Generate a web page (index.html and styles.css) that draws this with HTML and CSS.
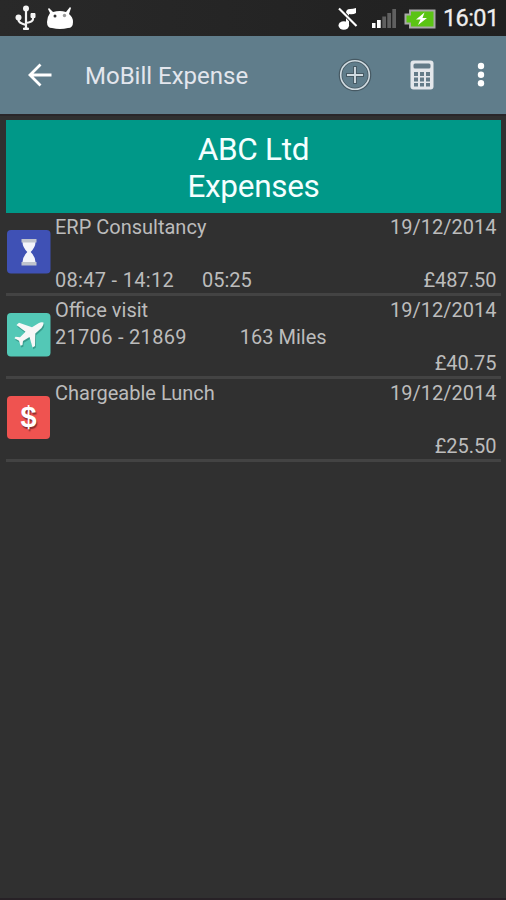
FILE: index.html
```html
<!DOCTYPE html>
<html lang="en">
<head>
<meta charset="utf-8">
<title>MoBill Expense</title>
<link rel="stylesheet" href="styles.css">
</head>
<body>
<div class="status">
  <svg class="usb" width="22" height="28" viewBox="0 0 22 28" fill="none" stroke="#f4f4f4" stroke-width="2.2">
    <path d="M11 3V25M3.500 14v2q0 3 7.500 5M18 12v3q0 3-7 4"/>
    <circle cx="11" cy="4.500" r="3" fill="#f4f4f4" stroke="none"/><circle cx="3.500" cy="13.500" r="3" fill="#f4f4f4" stroke="none"/><path d="M16 9.500h4v4h-4zM8.500 24h5v1.500h-5z" fill="#f4f4f4" stroke-width="1"/>
  </svg>
  <svg class="droid" width="28" height="24" viewBox="0 0 28 24">
    <path d="M3 1l4 4q7-2 13 0l4-5 1 1-2 6q4 3 4 8 0 6-5 6-8 2-16 0-5 0-5-6Q1 10 4 6L2 2Z" fill="#fff"/>
    <circle cx="9" cy="9" r="1.500" fill="#333"/><circle cx="18.500" cy="8.500" r="1.700" fill="#999"/>
  </svg>
  <span class="spacer"></span>
  <svg class="mute" width="20" height="24" viewBox="0 0 20 24">
    <ellipse cx="5.800" cy="18.500" rx="5.300" ry="4.200" fill="#fff"/>
    <path d="M8 19V6q0-4 4-4 3 0 6-1v5q-3 2-7 1v12Z" fill="#fff"/>
    <path d="M2 2l17 18" stroke="#222" stroke-width="4"/><path d="M1 1.500l17.500 17.500" stroke="#fff" stroke-width="2.200"/>
  </svg>
  <svg class="signal" width="26" height="20" viewBox="0 0 26 20">
    <path d="M1 14h3.500v5H1zM6 11h3.700v8H6z" fill="#fff"/><path d="M11.300 7.500H15V19h-3.700zM16.300 4H20v15h-3.700zM21.300 0H25v19h-3.700z" fill="#606060"/>
  </svg>
  <svg class="battery" width="32" height="20" viewBox="0 0 32 20">
    <path d="M6 1.500h24.500v17H6v-4H1.500v-9H6Z" fill="#5bc414" stroke="#a8a8a8" stroke-width="2"/>
    <path d="M20.500 3.500l-8.500 7h4.500L14 16l9-7h-4.500Z" fill="#fff"/>
  </svg>
  <span class="clock">16:01</span>
</div>
<header class="bar">
  <svg class="back" width="24" height="24" viewBox="0 0 24 24" fill="none" stroke="#fff" stroke-width="2.800"><path d="M23.500 12H2M12.500 1.500L2 12l10.500 10.500"/></svg>
  <h1 class="title">MoBill Expense</h1>
  <span class="spacer"></span>
  <svg class="add" width="34" height="34" viewBox="0 0 34 34" fill="none">
    <circle cx="17" cy="17" r="14.500" stroke="#465963" stroke-width="3.600"/><path d="M17 8v18M8 17h18" stroke="#465963" stroke-width="3.800"/>
    <circle cx="17" cy="17" r="14.300" stroke="#d0dbe1" stroke-width="1.600"/><path d="M17 9v16M9 17h16" stroke="#d0dbe1" stroke-width="1.900"/>
  </svg>
  <svg class="calc" width="24" height="30" viewBox="0 0 24 30">
    <rect x=".5" y=".5" width="23" height="29" rx="3" fill="#e3e7eb"/>
    <rect x="3.500" y="3.500" width="17" height="5" rx="1.500" fill="#637b88"/>
    <path d="M4 12h4v4H4zM10 12h4v4h-4zM16 12h4v4h-4zM4 17.500h4v4H4zM10 17.500h4v4h-4zM16 17.500h4v4h-4zM4 23h4v3.500H4zM10 23h4v3.500h-4zM16 23h4v3.500h-4z" fill="#637b88"/>
  </svg>
  <svg class="more" width="8" height="26" viewBox="0 0 8 26" fill="#fff"><circle cx="4" cy="4" r="3.200"/><circle cx="4" cy="12.700" r="3.200"/><circle cx="4" cy="21.300" r="3.200"/></svg>
</header>
<main class="content">
  <h2 class="banner"><span>ABC Ltd</span><span>Expenses</span></h2>
  <section class="row">
    <svg class="tile" width="44" height="44" viewBox="0 0 44 44">
      <rect width="43.500" height="43.500" rx="4" fill="#3f51b5"/>
      <path d="M15.500 12h13q0 5-4.800 10 4.800 5 4.800 10h-13q0-5 4.800-10-4.800-5-4.800-10Z" fill="#f3f4fb"/><path d="M14.500 9h15v3.500h-15zM14.500 32h15v3.500h-15z" fill="#bfc3cd"/>
    </svg>
    <div class="details">
      <div class="line"><span>ERP Consultancy</span><span class="date">19/12/2014</span></div>
      <div class="line"></div>
      <div class="line"><span class="range">08:47 - 14:12</span><span class="duration">05:25</span><span class="amount">£487.50</span></div>
    </div>
  </section>
  <section class="row">
    <svg class="tile" width="44" height="44" viewBox="0 0 44 44">
      <rect width="43.500" height="43.500" rx="4" fill="#53c8b6"/>
      <path transform="translate(.8 1.800)" d="M36.500 9.500q-2.500-.8-5 .8l-6.500 4-13-4.500-2.500 2.200 9 6.800-5.500 5.500-4.500-.5-1 1.500 4.500 2.500 1.500 5 2-.8.500-4 6.500-4 3 10.500 2.500-1.500.3-12.500 6.200-5.500q2.500-2.500 2-5.500Z" fill="#267f72" opacity=".6"/>
      <path d="M36.500 9.500q-2.500-.8-5 .8l-6.500 4-13-4.500-2.500 2.200 9 6.800-5.500 5.500-4.500-.5-1 1.500 4.500 2.500 1.500 5 2-.8.500-4 6.500-4 3 10.500 2.500-1.500.3-12.500 6.200-5.500q2.500-2.500 2-5.500Z" fill="#f7f7f7"/>
    </svg>
    <div class="details">
      <div class="line"><span>Office visit</span><span class="date">19/12/2014</span></div>
      <div class="line"><span class="range">21706 - 21869</span><span class="miles">163 Miles</span></div>
      <div class="line"><span class="amount">£40.75</span></div>
    </div>
  </section>
  <section class="row">
    <div class="tile dollar">$</div>
    <div class="details">
      <div class="line"><span>Chargeable Lunch</span><span class="date">19/12/2014</span></div>
      <div class="line"></div>
      <div class="line"><span class="amount">£25.50</span></div>
    </div>
  </section>
</main>
</body>
</html>
```
FILE: styles.css
```css
* { box-sizing: border-box; }
body {
  margin: 0;
  height: 900px;
  background: #303030;
  border-bottom: 2px solid #272126;
  color: #bcbcbc;
  font-family: Roboto, "Liberation Sans", sans-serif;
  overflow: hidden;
}
svg { display: block; flex: none; }
.spacer { flex: 1; }
.status {
  display: flex;
  align-items: center;
  height: 36px;
  padding: 0 8px 0 15px;
  background: linear-gradient(90deg, #292929, #202020);
}
.droid { margin-left: 9px; margin-top: 1px; }
.mute { margin-right: 13px; margin-top: 2px; }
.signal { margin-right: 7px; margin-top: 2px; }
.battery { margin-right: 7px; margin-top: 2px; }
.clock { width: 55px; color: #eee; font-size: 23.5px; letter-spacing: -.6px; white-space: nowrap; -webkit-text-stroke: .3px #eee; }
.bar {
  display: flex;
  align-items: center;
  height: 78px;
  padding: 0 21px 0 28px;
  background: #607d8b;
}
.title {
  margin: 2px 0 0 33px;
  font-size: 24px;
  font-weight: 400;
  color: #e3e6ed;
  line-height: 28px;
  white-space: nowrap;
}
.calc { margin-left: 38px; }
.more { margin-left: 43px; }
.content {
  border-top: 2px solid #292629;
  padding: 4px 5px 0 6px;
}
.banner {
  display: flex;
  flex-direction: column;
  align-items: center;
  height: 93px;
  margin: 0;
  padding-top: 12px;
  background: #009888;
  color: #f4ffff;
  font-size: 31.5px;
  letter-spacing: -.3px;
  line-height: 36.5px;
  font-weight: 400;
}
.row {
  display: flex;
  height: 83px;
  border-bottom: 3px solid #434343;
}
.tile { width: 44px; height: 44px; margin: 17px 0 0 1px; flex: none; }
.dollar {
  width: 43px;
  height: 43px;
  margin-right: 1px;
  border-radius: 4px;
  background: #ef5350;
  color: #fff;
  text-align: center;
  font: bold 29px/43px "Liberation Sans", sans-serif;
  text-shadow: 1px 2px 1px #8e2f30;
}
.details { flex: 1; padding: 1px 4.5px 0 4px; }
.line {
  display: flex;
  height: 26.6px;
  line-height: 27px;
  font-size: 20px;
  white-space: nowrap;
}
.date, .amount { margin-left: auto; }
.range { letter-spacing: .3px; }
.duration { margin-left: 28px; }
.miles { margin-left: 53px; }
```
